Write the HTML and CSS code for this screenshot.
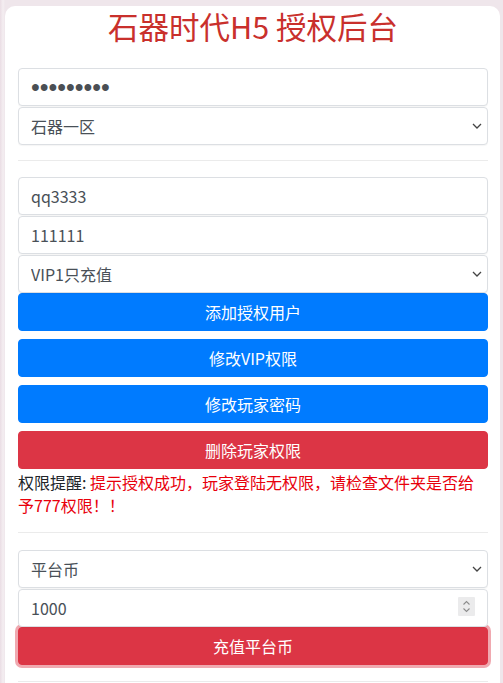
FILE: index.html
```html
<!DOCTYPE html>
<html lang="zh-CN">
<head>
<meta charset="utf-8">
<title>石器时代H5 授权后台</title>
<link rel="stylesheet" href="styles.css">
</head>
<body>
<div class="page">
  <div class="card">
    <h1 class="title">石器时代H5 授权后台</h1>

    <div class="group">
      <input class="field field-pass" type="password" value="123456789">
      <div class="select-wrap">
        <select class="field">
          <option>石器一区</option>
        </select>
        <svg class="chev" width="10" height="6" viewBox="0 0 10 6" aria-hidden="true"><path d="M1 1 L5 5 L9 1" fill="none" stroke="#444" stroke-width="1.3"/></svg>
      </div>
    </div>

    <hr class="divider divider-top">

    <div class="group">
      <input class="field" type="text" value="qq3333">
      <input class="field" type="text" value="111111">
      <div class="select-wrap">
        <select class="field">
          <option>VIP1只充值</option>
        </select>
        <svg class="chev" width="10" height="6" viewBox="0 0 10 6" aria-hidden="true"><path d="M1 1 L5 5 L9 1" fill="none" stroke="#444" stroke-width="1.3"/></svg>
      </div>
      <button class="btn btn-primary btn-first">添加授权用户</button>
      <button class="btn btn-primary">修改VIP权限</button>
      <button class="btn btn-primary">修改玩家密码</button>
      <button class="btn btn-danger">删除玩家权限</button>
    </div>
    <p class="notice"><span class="notice-label">权限提醒:</span> 提示授权成功，玩家登陆无权限，请检查文件夹是否给予777权限！！</p>

    <hr class="divider divider-mid">

    <div class="group">
      <div class="select-wrap">
        <select class="field">
          <option>平台币</option>
        </select>
        <svg class="chev" width="10" height="6" viewBox="0 0 10 6" aria-hidden="true"><path d="M1 1 L5 5 L9 1" fill="none" stroke="#444" stroke-width="1.3"/></svg>
      </div>
      <div class="num-wrap">
        <input class="field" type="text" value="1000">
        <svg class="spinner" width="17" height="19" viewBox="0 0 17 19" aria-hidden="true"><rect x="0" y="0" width="17" height="19" rx="1" fill="#ebebec"/><path d="M5.5 7.5 L8.5 4.5 L11.5 7.5" fill="none" stroke="#8c8c8c" stroke-width="1.1"/><path d="M5.5 11.5 L8.5 14.5 L11.5 11.5" fill="none" stroke="#8c8c8c" stroke-width="1.1"/></svg>
      </div>
      <button class="btn btn-danger btn-focus btn-first">充值平台币</button>
    </div>

    <hr class="divider divider-last">
  </div>
</div>
</body>
</html>
```

FILE: styles.css
```css
html, body {
  margin: 0;
  padding: 0;
}
body {
  font-family: "Noto Sans CJK SC", "Noto Sans", "Liberation Sans", sans-serif;
  font-size: 16px;
  color: #212529;
  background: #f1eaee;
}
.page {
  min-height: 683px;
  padding-left: 5px;
  background: linear-gradient(90deg, #eadde4 0, #f4eef1 3px, #efe6eb 5px);
  overflow: hidden;
}
.card {
  width: 470px;
  min-height: 683px;
  background: #ffffff;
  border-radius: 10px 10px 0 0;
  padding: 0 12px 0 13px;
  box-sizing: content-box;
}
.title {
  margin: 6px 0 22px;
  font-size: 30.5px;
  line-height: 40px;
  font-weight: 400;
  text-align: center;
  color: #c9302c;
}
.group {
  display: flex;
  flex-direction: column;
  gap: 1px;
}
.field {
  box-sizing: border-box;
  width: 470px;
  height: 38px;
  margin: 0;
  padding: 6px 12px;
  font-family: inherit;
  font-size: 16px;
  line-height: 24px;
  color: #495057;
  background-color: #fff;
  border: 1px solid #dcdfe3;
  border-radius: 4px;
  box-shadow: 0 1px 1px rgba(0,0,0,0.04);
  outline: none;
}
.field-pass {
  font-family: "Liberation Sans", sans-serif;
  font-size: 25px;
  line-height: 24px;
  letter-spacing: 0;
  color: #4b4f54;
}
select.field {
  -webkit-appearance: none;
  appearance: none;
  display: block;
}
.select-wrap {
  position: relative;
}
.chev {
  position: absolute;
  right: 6px;
  top: 16px;
  pointer-events: none;
}
.btn {
  box-sizing: border-box;
  width: 470px;
  height: 38px;
  margin: 7px 0 0 0;
  padding: 6px 12px;
  font-family: inherit;
  font-size: 16px;
  line-height: 24px;
  color: #fff;
  border: 1px solid transparent;
  border-radius: 4px;
  text-align: center;
  cursor: pointer;
}
.btn-first {
  margin-top: -1px;
}
.btn-primary {
  background-color: #007bff;
  border-color: #007bff;
}
.btn-danger {
  background-color: #dc3545;
  border-color: #dc3545;
}
.btn-focus {
  box-shadow: 0 0 0 3px rgba(225, 83, 97, 0.5);
}
.notice {
  margin: 2px 0 0 0;
  font-size: 16px;
  line-height: 23px;
  color: #e8000b;
}
.notice-label {
  color: #212529;
}
.divider {
  margin: 16px 0;
  border: 0;
  border-top: 1px solid rgba(0,0,0,0.08);
  height: 0;
}
.divider-top {
  margin: 15px 0 16px;
}
.divider-mid {
  margin: 15px 0 17px;
}
.divider-last {
  margin: 16px 0 0;
}
.num-wrap {
  position: relative;
}
.num-wrap .field {
  display: block;
}
.spinner {
  position: absolute;
  right: 13px;
  top: 8px;
  display: block;
  pointer-events: none;
}
```
